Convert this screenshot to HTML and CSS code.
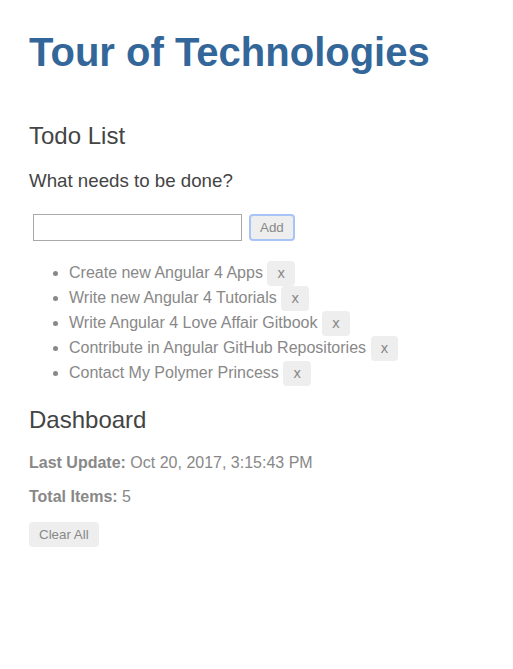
FILE: index.html
```html
<!DOCTYPE html>
<html>
<head>
<meta charset="utf-8">
<title>Tour of Technologies</title>
<link rel="stylesheet" href="styles.css">
</head>
<body>
<div class="app">
  <h1 class="title">Tour of Technologies</h1>
  <section class="todo">
    <h2 class="section-title">Todo List</h2>
    <h3 class="prompt">What needs to be done?</h3>
    <div class="add-row">
      <input class="todo-input" type="text">
      <button class="btn btn-add">Add</button>
    </div>
    <ul class="todo-list">
      <li class="todo-item">Create new Angular 4 Apps <button class="btn btn-remove">x</button></li>
      <li class="todo-item">Write new Angular 4 Tutorials <button class="btn btn-remove">x</button></li>
      <li class="todo-item">Write Angular 4 Love Affair Gitbook <button class="btn btn-remove">x</button></li>
      <li class="todo-item">Contribute in Angular GitHub Repositories <button class="btn btn-remove">x</button></li>
      <li class="todo-item">Contact My Polymer Princess <button class="btn btn-remove">x</button></li>
    </ul>
  </section>
  <section class="dashboard">
    <h2 class="section-title">Dashboard</h2>
    <p class="stat"><strong>Last Update:</strong> Oct 20, 2017, 3:15:43 PM</p>
    <p class="stat"><strong>Total Items:</strong> 5</p>
    <div class="actions"><button class="btn">Clear All</button></div>
  </section>
</div>
</body>
</html>
```
FILE: styles.css
```css
html, body {
  background: #fff;
}
body {
  margin: 0;
  color: #888;
  font-family: "Liberation Sans", Arial, sans-serif;
}
.app {
  padding: 30px 29px;
}
.title {
  color: #369;
  font-family: "Liberation Sans", Arial, sans-serif;
  font-size: 40px;
  font-weight: bold;
  margin: 0 0 26.8px;
}
.section-title {
  color: #444;
  font-weight: normal;
  font-size: 24px;
  margin: 21px 0 19.9px;
}
.todo .section-title {
  margin-top: 47px;
}
.prompt {
  color: #444;
  font-weight: normal;
  font-size: 18.72px;
  margin: 18.72px 0 0;
}
.add-row {
  display: flex;
  align-items: center;
  gap: 7px;
  margin: 22px 0 0 4px;
}
.todo-input {
  box-sizing: border-box;
  width: 209px;
  height: 27px;
  border: 1px solid #a9a9a9;
  padding: 1px 4px;
  margin: 0;
  color: #888;
  font-family: "Liberation Sans", Arial, sans-serif;
  font-size: 13.33px;
}
.btn {
  font-family: "Liberation Sans", Arial, sans-serif;
  font-size: 13.33px;
  color: #888;
  background-color: #eee;
  border: none;
  padding: 5px 10px;
  border-radius: 4px;
  cursor: pointer;
}
.btn-remove {
  font-family: "DejaVu Sans", sans-serif;
  font-size: 13.33px;
  line-height: 15px;
}
.btn-add {
  height: 27px;
  padding: 4px 9px;
  border: 2px solid #a6c5f6;
}
.todo-list {
  margin: 19px 0 0;
  padding-left: 40px;
  font-size: 16px;
}
.todo-item {
  line-height: 25px;
  height: 25px;
}
.stat {
  font-size: 16px;
  margin: 16px 0;
}
.stat strong {
  font-weight: bold;
}
.actions {
  margin-top: 16px;
}
```
